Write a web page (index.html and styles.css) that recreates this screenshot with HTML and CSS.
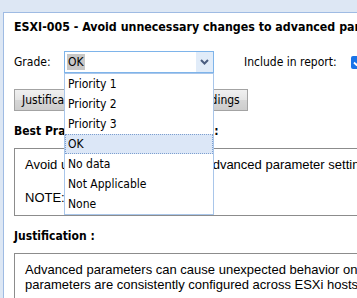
FILE: index.html
```html
<!DOCTYPE html>
<html lang="en">
<head>
    <meta charset="UTF-8">
    <meta name="viewport" content="width=device-width, initial-scale=1.0">
    <title>Best practice item</title>
    <link rel="stylesheet" href="styles.css">
</head>
<body>
    <div class="frame">
        <div class="content">
            <h1 class="title">ESXI-005 - Avoid unnecessary changes to advanced parameters</h1>

            <div class="grade-row">
                <span class="label">Grade:</span>
                <div class="select">
                    <span class="value"><span class="selected">OK</span></span>
                    <span class="arrow">
                        <svg width="9" height="6" viewBox="0 0 9 6"><path d="M1 1 L4.5 4.5 L8 1" fill="none" stroke="#4a5d80" stroke-width="2"/></svg>
                    </span>
                    <ul class="options">
                        <li>Priority 1</li>
                        <li>Priority 2</li>
                        <li>Priority 3</li>
                        <li class="active">OK</li>
                        <li>No data</li>
                        <li>Not Applicable</li>
                        <li>None</li>
                    </ul>
                </div>
                <span class="label include">Include in report:</span>
                <span class="checkbox">
                    <svg width="13" height="13" viewBox="0 0 13 13"><path d="M3 6.5 L5.5 9 L10 4" fill="none" stroke="white" stroke-width="1.8"/></svg>
                </span>
            </div>

            <div class="tabs">
                <button>Justification</button>
                <button>Best Practice</button>
                <button>Findings</button>
            </div>

            <h2 class="heading">Best Practice Recommendations :</h2>
            <div class="box">
                <p>Avoid unnecessary changes to advanced parameter settings.</p>
                <p>NOTE: Test changes first.</p>
            </div>

            <h2 class="heading">Justification :</h2>
            <div class="box">
                <p class="tight">Advanced parameters can cause unexpected behavior on the host. Make sure<br>parameters are consistently configured across ESXi hosts in a cluster.</p>
            </div>
        </div>
    </div>
</body>
</html>
```

FILE: styles.css
```css
body{
    margin:0;
    background:#dde7f4;
    overflow:hidden;
    font-family:"DejaVu Sans Condensed","Liberation Sans",sans-serif;
    font-size:12px;
    color:#000;
}

.frame
{
    margin:12px 0 0 3px;
    border-top:1px solid #9fbbe3;
    border-left:1px solid #9fbbe3;
    background:white;
    height:400px;
}

.content
{
    width:700px;
    padding:6px 0 0 10px;
}

.title
{
    margin:0;
    font-size:12.3px;
    font-weight:bold;
    line-height:16px;
    white-space:nowrap;
}

.grade-row
{
    display:flex;
    align-items:center;
    margin-top:16px;
    height:22px;
}

.label
{
    width:50px;
}

.select
{
    position:relative;
    display:flex;
    width:148px;
    height:20px;
    border:1px solid #7eb4ea;
    background:white;
}

.select .value
{
    flex:1;
    display:flex;
    align-items:center;
    padding-left:2px;
}

.selected
{
    background:#c8c8c8;
    padding:1px 1px;
}

.select .arrow
{
    width:17px;
    display:flex;
    align-items:center;
    justify-content:center;
    background:#e1ecf9;
}

.options
{
    position:absolute;
    top:21px;
    left:-1px;
    width:148px;
    margin:0;
    padding:0;
    list-style:none;
    background:white;
    border:1px solid #a9c6ea;
    z-index:2;
}

.options li
{
    height:20px;
    line-height:20px;
    padding-left:3px;
}

.options li.active
{
    background:#dce7f7;
    outline:1px dotted #7d9fcf;
    outline-offset:-1px;
}

.include
{
    width:auto;
    margin-left:30px;
}

.checkbox
{
    width:13px;
    height:13px;
    margin-left:14px;
    background:#1a73e8;
    border-radius:2px;
    display:flex;
}

.tabs
{
    display:flex;
    margin-top:16px;
}

.tabs button
{
    font:inherit;
    height:22px;
    padding:0 7px;
    margin-right:4px;
    border:1px solid #a3a3a3;
    background:linear-gradient(#f0f0f0,#e4e4e4 50%,#d6d6d6 51%,#cdcdcd);
    color:#000;
}

.heading
{
    margin:12px 0 0;
    font-size:12px;
    font-weight:bold;
    line-height:16px;
}

.box
{
    margin-top:9px;
    border:1px solid #8c8c8c;
    padding:8px 10px 10px;
    font-family:"Liberation Sans",Arial,sans-serif;
    font-size:13px;
    line-height:15px;
    white-space:nowrap;
}

.box p
{
    margin:0 0 18px;
}

.box p:last-child
{
    margin-bottom:0;
}
```
